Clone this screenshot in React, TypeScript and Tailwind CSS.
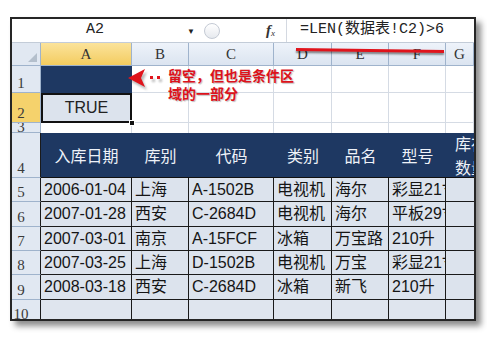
import React from "react";

const sans = { fontFamily: '"Liberation Sans", "Noto Sans CJK SC", sans-serif' };
const serif = { fontFamily: '"Liberation Serif", "Noto Sans CJK SC", serif' };
const mono = { fontFamily: '"Liberation Mono", "Noto Sans CJK SC", monospace' };
const cjk = { fontFamily: '"Noto Sans CJK SC", sans-serif' };

const letters = ["A", "B", "C", "D", "E", "F", "G"];
const heads = ["入库日期", "库别", "代码", "类别", "品名", "型号"];
const rows = [
  ["2006-01-04", "上海", "A-1502B", "电视机", "海尔", "彩显21寸"],
  ["2007-01-28", "西安", "C-2684D", "电视机", "海尔", "平板29寸"],
  ["2007-03-01", "南京", "A-15FCF", "冰箱", "万宝路", "210升"],
  ["2007-03-25", "上海", "D-1502B", "电视机", "万宝", "彩显21寸"],
  ["2008-03-18", "西安", "C-2684D", "冰箱", "新飞", "210升"],
];

const RowHead = ({ n, active = false, dark = false }: { n: string; active?: boolean; dark?: boolean }) => (
  <div
    className={`flex items-end overflow-hidden border-b border-[#9fb3cc] ${
      dark ? "border-r border-r-[#1a1a1a]" : "border-r border-r-[#9fb3cc]"
    } ${active ? "bg-[#f5d26c]" : "bg-[#e1e8f2]"}`}
  >
    <span className="w-[18px] text-center text-[15px] leading-[15px] text-[#3a3a3a] pb-[1px]" style={serif}>
      {n}
    </span>
  </div>
);

const Blank = () => <div className="border-r border-b border-[#d5dbe4] bg-white" />;

export default function App() {
  return (
    <div className="relative w-[487px] h-[340px] bg-white overflow-hidden pl-[10px] pt-[17px]">
      <div className="w-[466px] h-[304px] border-2 border-[#262626] bg-white shadow-[5px_5px_6px_rgba(0,0,0,0.45)] overflow-hidden flex flex-col">
        {/* formula bar */}
        <div className="h-[24px] flex items-center border-b border-[#c3ccd8] shrink-0">
          <div className="w-[166px] text-center text-[15px] text-[#222]" style={mono}>
            A2
          </div>
          <div className="w-[26px] flex justify-center text-[8px] text-[#222]">▼</div>
          <div className="w-[16px] h-[16px] rounded-full border border-[#c4cad4] bg-gradient-to-b from-white to-[#e6e9ee]" />
          <div className="w-[46px]" />
          <div className="w-[20px] text-[#333] flex items-end" style={serif}>
            <span className="italic font-bold text-[15px] leading-none">f</span>
            <span className="italic text-[9px] leading-none">x</span>
          </div>
          <div className="h-full border-l border-[#d4d9e1] pl-[13px] flex items-center text-[15px] text-[#222]" style={mono}>
            =LEN(数据表!C2)&gt;6
          </div>
        </div>

        {/* sheet grid */}
        <div className="flex-1 grid grid-cols-[29px_91px_57px_85px_58px_57px_57px_1fr] grid-rows-[23px_27px_30px_10px_45px_24px_25px_24px_24px_25px_1fr]">
          {/* column headers */}
          <div className="relative border-r border-b border-[#9fb3cc] bg-[#e1e8f2]">
            <div className="absolute right-[3px] bottom-[3px] w-0 h-0 border-l-[9px] border-l-transparent border-b-[9px] border-b-[#b4bfcc]" />
          </div>
          {letters.map((l, i) => (
            <div
              key={l}
              className={`flex items-center justify-center border-r border-b border-[#9fb3cc] text-[15px] text-[#333] ${
                i === 0 ? "bg-gradient-to-b from-[#fbe39a] to-[#f3cc5e]" : "bg-gradient-to-b from-[#eef3fa] to-[#dbe4f0]"
              }`}
              style={serif}
            >
              {l}
            </div>
          ))}

          {/* row 1 */}
          <RowHead n="1" />
          <div className="bg-[#1e3862] border-r border-[#1e3862]" />
          {[0, 1, 2, 3, 4, 5].map((i) => (
            <Blank key={"r1" + i} />
          ))}

          {/* row 2 */}
          <RowHead n="2" active />
          <div className="relative bg-[#dce3ed] flex items-center justify-center text-[16px] text-[#222]" style={sans}>
            TRUE
            <div className="absolute inset-0 border-2 border-[#111]" />
            <div className="absolute right-[-3px] bottom-[-3px] w-[6px] h-[6px] bg-[#111] border border-white" />
          </div>
          {[0, 1, 2, 3, 4, 5].map((i) => (
            <Blank key={"r2" + i} />
          ))}

          {/* row 3 (squeezed, number clipped) */}
          <div className="flex items-start overflow-hidden border-r border-b border-[#9fb3cc] bg-[#e1e8f2]">
            <span className="w-[18px] text-center text-[15px] leading-[9px] text-[#3a3a3a]" style={serif}>
              3
            </span>
          </div>
          {[0, 1, 2, 3, 4, 5, 6].map((i) => (
            <div key={"r3" + i} className="border-r border-[#d5dbe4] bg-white" />
          ))}

          {/* row 4 header */}
          <RowHead n="4" dark />
          {heads.map((h) => (
            <div
              key={h}
              className="bg-[#1e3862] border-b border-[#111] flex items-center justify-center text-[16px] text-[#eef2f8]"
              style={cjk}
            >
              {h}
            </div>
          ))}
          <div className="bg-[#1e3862] border-b border-[#111] overflow-hidden flex items-center">
            <div className="ml-[9px] w-[40px] shrink-0 text-[16px] leading-[24px] text-[#eef2f8]" style={cjk}>
              库存
              <br />
              数量
            </div>
          </div>

          {/* data rows */}
          {rows.map((r, ri) => (
            <React.Fragment key={"d" + ri}>
              <RowHead n={String(ri + 5)} dark />
              {r.map((c, ci) => (
                <div
                  key={ci}
                  className="bg-[#dce3ed] border-r border-b border-[#1a1a1a] flex items-center pl-[3px] overflow-hidden whitespace-nowrap text-[16px] text-[#151515]"
                  style={sans}
                >
                  {c}
                </div>
              ))}
              <div className="bg-[#dce3ed] border-b border-[#1a1a1a]" />
            </React.Fragment>
          ))}

          {/* row 10 */}
          <div className="flex items-end overflow-hidden border-r border-[#1a1a1a] bg-[#e1e8f2]">
            <span className="w-[18px] text-center text-[15px] leading-[15px] text-[#3a3a3a] -mb-[3px]" style={serif}>
              10
            </span>
          </div>
          {[0, 1, 2, 3, 4, 5].map((i) => (
            <div key={"r10" + i} className="bg-[#dfe5ee] border-r border-[#1a1a1a]" />
          ))}
          <div className="bg-[#dfe5ee]" />
        </div>
      </div>

      {/* red underline under formula */}
      <div className="absolute left-[296px] top-[49px] w-[148px] h-[3px] bg-[#e0141c] rotate-[0.8deg] shadow-[0_2px_2px_rgba(0,0,0,0.45)]" />

      {/* arrow annotation */}
      <svg className="absolute left-[124px] top-[68px]" width="42" height="24" viewBox="0 0 42 24">
        <defs>
          <filter id="blur" x="-20%" y="-20%" width="140%" height="140%">
            <feGaussianBlur stdDeviation="1.2" />
          </filter>
        </defs>
        <g filter="url(#blur)" opacity="0.4" transform="translate(2 3)">
          <path d="M4 10 L21 1 L17 10 L21 19 Z" fill="#555" />
          <rect x="26" y="8" width="3" height="3" fill="#555" />
          <rect x="33" y="8" width="3" height="3" fill="#555" />
        </g>
        <path d="M4 10 L21 1 L17 10 L21 19 Z" fill="#e0141c" />
        <rect x="26" y="8" width="3" height="3" fill="#e0141c" />
        <rect x="33" y="8" width="3" height="3" fill="#e0141c" />
      </svg>
      <div
        className="absolute left-[168px] top-[66px] text-[14px] leading-[18px] font-bold text-[#dc121b] [text-shadow:1px_1px_1px_rgba(0,0,0,0.25)]"
        style={cjk}
      >
        留空，但也是条件区
        <br />
        域的一部分
      </div>
    </div>
  );
}
